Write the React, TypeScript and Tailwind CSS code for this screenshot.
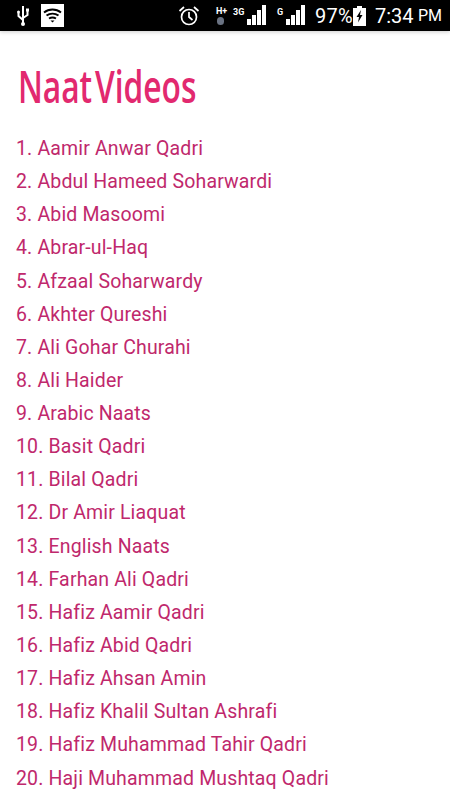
const names = [
  'Aamir Anwar Qadri',
  'Abdul Hameed Soharwardi',
  'Abid Masoomi',
  'Abrar-ul-Haq',
  'Afzaal Soharwardy',
  'Akhter Qureshi',
  'Ali Gohar Churahi',
  'Ali Haider',
  'Arabic Naats',
  'Basit Qadri',
  'Bilal Qadri',
  'Dr Amir Liaquat',
  'English Naats',
  'Farhan Ali Qadri',
  'Hafiz Aamir Qadri',
  'Hafiz Abid Qadri',
  'Hafiz Ahsan Amin',
  'Hafiz Khalil Sultan Ashrafi',
  'Hafiz Muhammad Tahir Qadri',
  'Haji Muhammad Mushtaq Qadri',
];

function Signal() {
  return (
    <svg width="20" height="20" viewBox="0 0 20 20" fill="white">
      <rect x="0" y="14" width="4" height="6" />
      <rect x="5" y="10" width="4" height="10" />
      <rect x="10" y="5" width="4" height="15" />
      <rect x="15" y="0" width="4" height="20" />
    </svg>
  );
}

function StatusBar() {
  return (
    <div className="flex h-[31px] items-center bg-black pl-4 text-white font-['Roboto',sans-serif] shadow-[0_1px_4px_rgba(0,0,0,0.2)]">
      <svg className="shrink-0" width="14" height="22" viewBox="0 0 14 22" fill="none" stroke="white" strokeWidth="2">
        <path d="M7 1v17M7 15L2.500 11V8M7 13l4.500-3V6" />
        <circle cx="7" cy="19" r="2" fill="white" stroke="none" />
        <circle cx="2.500" cy="7" r="1.500" fill="white" stroke="none" />
        <rect x="10" y="3.500" width="3" height="3" fill="white" stroke="none" />
      </svg>
      <div className="ml-[11px] flex h-[23px] w-[23px] shrink-0 items-center justify-center bg-white">
        <svg width="19" height="15" viewBox="0 0 19 15" fill="none" stroke="black" strokeWidth="2">
          <path d="M1 4.500C6 .5 13 .5 18 4.500M3.500 7.500C7 5 12 5 15.500 7.500M6 10.500c2-1.200 5-1.200 7 0" />
          <path d="M7.500 12.500h4l-2 2z" fill="black" stroke="none" />
        </svg>
      </div>
      <svg className="ml-[114px] shrink-0" width="22" height="22" viewBox="0 0 22 22" fill="none" stroke="white" strokeWidth="1.700">
        <circle cx="11" cy="12" r="7.500" />
        <path d="M11 7v5l3.500 3M1.500 6L6 2M20.500 6L16 2" />
      </svg>
      <div className="relative ml-[16px] h-[24px] w-[16px] shrink-0">
        <span className="absolute left-0 top-[1px] text-[9px] font-bold leading-[12px]">H+</span>
        <span className="absolute left-[1px] top-[13px] h-[8px] w-[7px] rounded-sm bg-gray-500" />
      </div>
      <span className="ml-[1px] w-[13px] self-start pt-[6px] text-[9px] font-bold leading-[12px]">3G</span>
      <div className="ml-[1px] mt-[-2px]"><Signal /></div>
      <span className="ml-[10px] w-[6px] self-start pt-[6px] text-[9px] font-bold leading-[12px]">G</span>
      <div className="ml-[3px] mt-[-2px]"><Signal /></div>
      <span className="ml-[9px] w-[37px] text-[20px] leading-none tracking-[0.3px]">97%</span>
      <svg className="ml-[1px] shrink-0" width="13" height="20" viewBox="0 0 13 20" fill="white">
        <path d="M4 0h5v2h4v18H0V2h4z" />
        <path d="M8 4L3.500 11H6l-1 5.500L9.500 9H7z" fill="black" />
      </svg>
      <span className="ml-[9px] w-[38px] text-[20px] leading-none">7:34</span>
      <span className="ml-[5px] text-[16px] leading-none">PM</span>
    </div>
  );
}

export default function App() {
  return (
    <div className="h-[800px] w-[450px] overflow-hidden bg-white">
      <StatusBar />
      <h1 className="mt-[27px] h-[54px] origin-left scale-x-[0.69] pl-[26px] font-['Open_Sans',sans-serif] text-[46px] font-semibold leading-[54px] text-[#e2296f] whitespace-nowrap [word-spacing:-8px]">
        Naat Videos
      </h1>
      <ol className="mt-[20px] pl-[16px] font-['Roboto',sans-serif] text-[19.500px] tracking-[0.15px] text-[#c0286c]">
        {names.map((name, i) => (
          <li key={name} className="flex h-[33.150px] items-center gap-[5px] whitespace-nowrap">
            <span>{i + 1}.</span>
            <span>{name}</span>
          </li>
        ))}
      </ol>
    </div>
  );
}
